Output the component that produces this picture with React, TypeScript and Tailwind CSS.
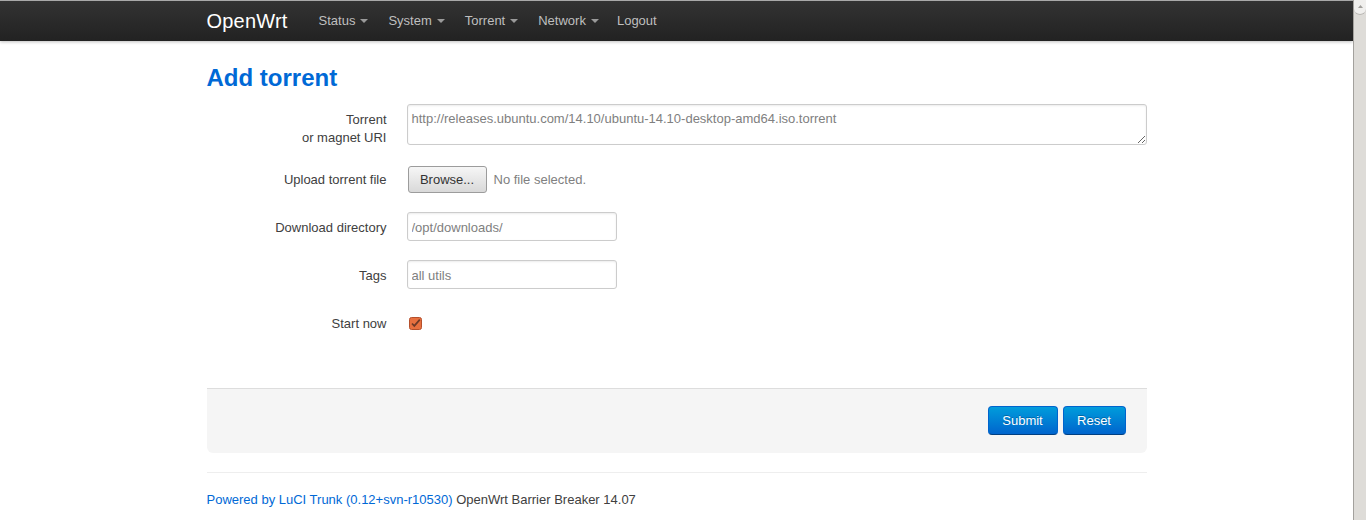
import React from "react";

const navItems = ["Status", "System", "Torrent", "Network"];

function Caret() {
  return (
    <svg width="8" height="4" viewBox="0 0 8 4" className="ml-[5px]">
      <path d="M0 0h8L4 4z" fill="#9a9a9a" />
    </svg>
  );
}

function CheckedBox() {
  return (
    <svg width="13" height="13" viewBox="0 0 13 13">
      <rect x="0.5" y="0.5" width="12" height="12" rx="2" fill="#e8703f" stroke="#b5502c" />
      <path d="M3 6.5l2.3 2.4L10.8 2.6" fill="none" stroke="#6e3a28" strokeWidth="1.7" />
    </svg>
  );
}

function Row({ label, children, top = false, className = "" }: { label: React.ReactNode; children: React.ReactNode; top?: boolean; className?: string }) {
  return (
    <div className={`flex items-start ${top ? "h-[41px]" : "h-[30px]"} ${className}`}>
      <label className="w-[180px] pt-[7px] text-right text-[13px] leading-[18px] text-[#404040]">
        {label}
      </label>
      <div className="ml-[20px] flex flex-1 items-start">{children}</div>
    </div>
  );
}

const inputCls =
  "h-[29px] w-[210px] rounded-[3px] border border-[#cccccc] px-[4px] pt-[2px] text-[13px] text-[#404040] placeholder:text-[#808080] shadow-[inset_0_1px_2px_rgba(0,0,0,0.08)] outline-none";

const btnCls =
  "flex h-[29px] items-center justify-center rounded-[4px] border border-[#0064cd] border-b-[#003f81] bg-gradient-to-b from-[#049cdb] to-[#0064cd] text-[13px] text-white [text-shadow:0_-1px_0_rgba(0,0,0,0.25)]";

export default function App() {
  return (
    <div className="flex h-[520px] w-[1366px] overflow-hidden bg-white font-['Liberation_Sans',Arial,sans-serif]">
      <div className="flex-1">
        <div className="h-[41px] border-t border-[#a9a9a9] bg-gradient-to-b from-[#333333] to-[#222222] shadow-[0_1px_3px_rgba(0,0,0,0.25)]">
          <div className="mx-auto flex h-[40px] w-[940px] items-center">
            <span className="pr-[21px] text-[20px] leading-[24px] tracking-[0.2px] text-white">OpenWrt</span>
            {navItems.map((n) => (
              <span key={n} className="flex items-center px-[10px] text-[13px] text-[#bfbfbf]">
                {n}
                <Caret />
              </span>
            ))}
            <span className="pl-[8px] pr-[10px] text-[13px] text-[#bfbfbf]">Logout</span>
          </div>
        </div>

        <div className="mx-auto w-[940px] pt-[19px]">
          <h1 className="text-[24px] font-bold leading-[36px] text-[#0069d6]">Add torrent</h1>

          <div className="mt-[8px]">
            <Row label={<>Torrent<br />or magnet URI</>} top className="mb-[19px]">
              <textarea
                className="h-[41px] w-[740px] rounded-[3px] border border-[#cccccc] px-[4px] pb-[4px] pt-[5px] text-[13px] leading-[18px] text-[#404040] placeholder:text-[#808080] shadow-[inset_0_1px_2px_rgba(0,0,0,0.08)] outline-none"
                placeholder="http://releases.ubuntu.com/14.10/ubuntu-14.10-desktop-amd64.iso.torrent"
              />
            </Row>

            <Row label="Upload torrent file" className="mb-[18px]">
              <span className="ml-[1px] mt-[2px] flex h-[27px] w-[79px] items-center justify-center rounded-[3px] border border-[#9c9c9c] bg-gradient-to-b from-[#f6f6f6] to-[#d9d9d9] text-[13px] text-[#333333]">
                Browse...
              </span>
              <span className="ml-[7px] mt-[7px] text-[13px] leading-[18px] text-[#808080]">No file selected.</span>
            </Row>

            <Row label="Download directory" className="mb-[18px]">
              <input className={inputCls} placeholder="/opt/downloads/" />
            </Row>

            <Row label="Tags" className="mb-[18px]">
              <input className={inputCls} placeholder="all utils" />
            </Row>

            <Row label="Start now">
              <span className="ml-[2px] mt-[9px] flex">
                <CheckedBox />
              </span>
            </Row>
          </div>

          <div className="mt-[50px] flex justify-end gap-[5px] rounded-b-[6px] border-t border-[#dddddd] bg-[#f5f5f5] pb-[18px] pl-[150px] pr-[21px] pt-[17px]">
            <span className={`${btnCls} w-[70px]`}>Submit</span>
            <span className={`${btnCls} w-[63px]`}>Reset</span>
          </div>

          <div className="mt-[19px] border-t border-[#eeeeee] pt-[18px] text-[13px] leading-[18px] text-[#404040]">
            <span className="text-[#0069d6]">Powered by LuCI Trunk (0.12+svn-r10530)</span> OpenWrt Barrier Breaker 14.07
          </div>
        </div>
      </div>

      <div className="flex w-[13px] flex-col border-l border-[#a3a19d] bg-[#dedcd8]">
        <div className="flex h-[15px] items-start justify-center rounded-b-[6px] border-b border-[#b8b6b2] bg-[#f0efed] pt-[5px]">
          <svg width="5" height="3" viewBox="0 0 5 3">
            <path d="M0 3h5L2.5 0z" fill="#a09e9a" />
          </svg>
        </div>
      </div>
    </div>
  );
}
